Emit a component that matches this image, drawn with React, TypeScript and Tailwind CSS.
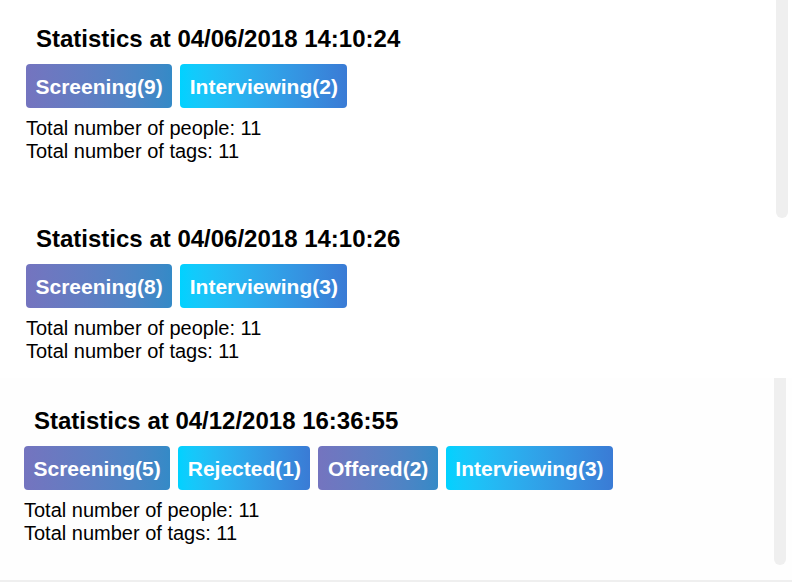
import React from 'react';

type Tag = { label: string; count: number; tone: 'violet' | 'reef' };

interface Snapshot {
  time: string;
  tags: Tag[];
  people: number;
  tagTotal: number;
}

const firstPanel: Snapshot[] = [
  {
    time: '04/06/2018 14:10:24',
    tags: [
      { label: 'Screening', count: 9, tone: 'violet' },
      { label: 'Interviewing', count: 2, tone: 'reef' },
    ],
    people: 11,
    tagTotal: 11,
  },
  {
    time: '04/06/2018 14:10:26',
    tags: [
      { label: 'Screening', count: 8, tone: 'violet' },
      { label: 'Interviewing', count: 3, tone: 'reef' },
    ],
    people: 11,
    tagTotal: 11,
  },
];

const secondPanel: Snapshot = {
  time: '04/12/2018 16:36:55',
  tags: [
    { label: 'Screening', count: 5, tone: 'violet' },
    { label: 'Rejected', count: 1, tone: 'reef' },
    { label: 'Offered', count: 2, tone: 'violet' },
    { label: 'Interviewing', count: 3, tone: 'reef' },
  ],
  people: 11,
  tagTotal: 11,
};

function TagBadge({ tag }: { tag: Tag }) {
  const tone =
    tag.tone === 'violet'
      ? 'bg-gradient-to-r from-[#7474bf] to-[#348ac7]'
      : 'bg-gradient-to-r from-[#00d2ff] to-[#3a7bd5]';
  return (
    <span className={`${tone} rounded-[4px] px-[9.5px] h-[44px] flex items-center text-white font-bold text-[21px] leading-none`}>
      {tag.label}({tag.count})
    </span>
  );
}

function StatsBlock({ snapshot }: { snapshot: Snapshot }) {
  return (
    <div>
      <h3 className="ml-[10px] text-[24px] font-bold leading-[28px] text-black">
        Statistics at {snapshot.time}
      </h3>
      <div className="mt-[11px] flex gap-[8px]">
        {snapshot.tags.map((tag, index) => (
          <TagBadge key={index} tag={tag} />
        ))}
      </div>
      <div className="mt-[9px] text-[20px] leading-[23px] text-black">
        <div>Total number of people: {snapshot.people}</div>
        <div>Total number of tags: {snapshot.tagTotal}</div>
      </div>
    </div>
  );
}

export default function App() {
  return (
    <div
      className="w-[792px] h-[582px] overflow-hidden bg-white flex flex-col"
      style={{ fontFamily: '"Liberation Sans", Arial, sans-serif' }}
    >
      {/* Upper panel */}
      <div className="relative h-[378px] pl-[26px] pt-[25px] flex flex-col gap-[62px]">
        {firstPanel.map((snap, index) => (
          <StatsBlock key={index} snapshot={snap} />
        ))}
        <div className="absolute right-[4px] top-0 w-[12px] h-[218px] bg-[#efefef] rounded-b-[6px]" />
      </div>

      {/* Lower panel */}
      <div className="relative h-[202px] pl-[24px] pt-[29px] bg-[#fefefe]">
        <StatsBlock snapshot={secondPanel} />
        <div className="absolute right-[6px] top-0 w-[12px] h-[187px] bg-[#efefef] rounded-b-[6px]" />
      </div>
      <div className="h-[2px] bg-[#efefef]" />
    </div>
  );
}
